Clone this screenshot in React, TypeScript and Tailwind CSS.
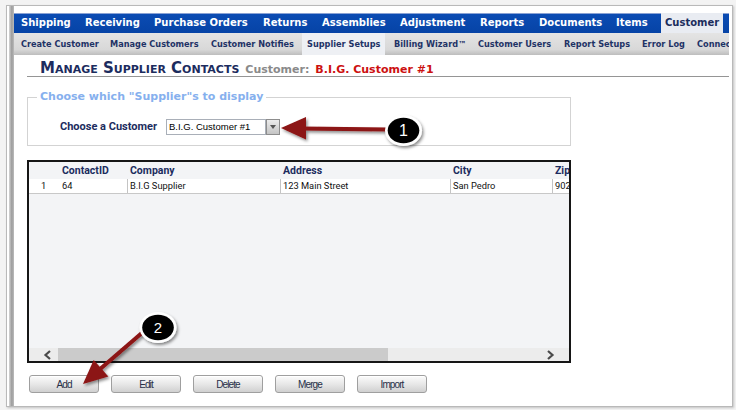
import React from "react";

const navItems = [
  { label: "Shipping", cls: "w-[64px]" },
  { label: "Receiving", cls: "w-[69px]" },
  { label: "Purchase Orders", cls: "w-[109px]" },
  { label: "Returns", cls: "w-[59px]" },
  { label: "Assemblies", cls: "w-[78px]" },
  { label: "Adjustment", cls: "w-[80px]" },
  { label: "Reports", cls: "w-[59px]" },
  { label: "Documents", cls: "w-[77px]" },
  { label: "Items", cls: "w-[52px]" },
];

const subItems = [
  { label: "Create Customer", cls: "w-[89px] pl-[7px]" },
  { label: "Manage Customers", cls: "w-[101px] pl-[7px]" },
  { label: "Customer Notifies", cls: "w-[98px] pl-[7px]" },
  { label: "Supplier Setups", cls: "w-[83px] pl-[5px] bg-[#eef0f4]" },
  { label: "Billing Wizard™", cls: "w-[86px] pl-[9px]" },
  { label: "Customer Users", cls: "w-[86px] pl-[7px]" },
  { label: "Report Setups", cls: "w-[78px] pl-[7px]" },
  { label: "Error Log", cls: "w-[55px] pl-[7px]" },
  { label: "Connections", cls: "w-[80px] pl-[7px]" },
];

const buttons = ["Add", "Edit", "Delete", "Merge", "Import"];

export default function App() {
  return (
    <div className="relative w-[736px] h-[410px] overflow-hidden bg-[#f3f3f3] pt-[5px] pl-[6px]">
      <div className="flex w-[727px] h-[402px] border border-[#b9b9b9] bg-white shadow-[1px_1px_2px_rgba(0,0,0,0.2)]">
        <div className="w-[2px] shrink-0" />
        <div className="w-[5px] shrink-0 bg-[linear-gradient(to_right,#d6d6d6,#9c9c9c_55%,#bcbcbc)]" />
        <div className="flex-1 min-w-0 pt-[7px] pr-[3px] flex flex-col">
          {/* top nav */}
          <div className="flex h-[20px] shrink-0 overflow-hidden bg-[linear-gradient(to_bottom,#8aa2d4_0px,#8aa2d4_1px,#0b4cb3_1px,#0643a6_100%)] font-['DejaVu_Sans',sans-serif] text-[10px] font-bold leading-[20px] text-white">
            {navItems.map((n) => (
              <div key={n.label} className={`${n.cls} shrink-0 pl-[7px] whitespace-nowrap`}>
                {n.label}
              </div>
            ))}
            <div className="w-[62px] shrink-0 pl-[4px] bg-[#e9ecf2] text-[#1b2d5c] whitespace-nowrap">
              Customer
            </div>
          </div>
          {/* sub nav */}
          <div className="flex h-[22px] shrink-0 overflow-hidden bg-[linear-gradient(to_bottom,#e4e4e4,#d8d8d8_75%,#bdbdbd)] font-['DejaVu_Sans',sans-serif] text-[8.2px] font-bold leading-[22px] text-[#1f3366]">
            {subItems.map((s) => (
              <div key={s.label} className={`${s.cls} shrink-0 whitespace-nowrap`}>
                {s.label}
              </div>
            ))}
          </div>
          {/* title */}
          <div className="ml-[13px] h-[22px] shrink-0 border-b border-[#959595] pt-[5px] pl-[13px] flex items-baseline font-['DejaVu_Sans',sans-serif] font-bold leading-[16px] whitespace-nowrap">
            <span className="text-[15px] text-[#1c2c5e] [font-variant:small-caps]">Manage Supplier Contacts</span>
            <span className="ml-[6px] text-[11px] text-[#8a8a8a]">Customer:</span>
            <span className="ml-[6px] text-[11px] text-[#cc1111]">B.I.G. Customer #1</span>
          </div>
          {/* fieldset */}
          <fieldset className="mt-[13px] ml-[13px] w-[544px] shrink-0 border border-[#d3d3d3] pl-[9px]">
            <legend className="px-[3px] font-['DejaVu_Sans',sans-serif] text-[11px] font-bold leading-[14px] text-[#86b0ee]">
              Choose which "Supplier"s to display
            </legend>
            <div className="flex items-center h-[16px] mt-[15px] mb-[10px] ml-[23px]">
              <div className="w-[106px] font-['Roboto',sans-serif] text-[11px] font-bold text-[#1c2c5e] whitespace-nowrap">
                Choose a Customer
              </div>
              <div className="w-[100px] h-[16px] border border-[#a9afb8] bg-white pl-[2px] font-['Liberation_Sans',Arial,sans-serif] text-[9.5px] leading-[14px] text-black whitespace-nowrap">
                B.I.G. Customer #1
              </div>
              <div className="w-[14px] h-[16px] border border-[#8d8d8d] bg-[linear-gradient(to_bottom,#ececec,#c4c4c4)] flex items-center justify-center">
                <svg width="6" height="4" viewBox="0 0 6 4">
                  <polygon points="0,0 6,0 3,4" fill="#555" />
                </svg>
              </div>
            </div>
          </fieldset>
          {/* grid */}
          <div className="mt-[14px] ml-[13px] w-[544px] h-[203px] shrink-0 border-2 border-[#161616] bg-[#f3f4f6] flex flex-col overflow-hidden">
            <div className="flex h-[17px] shrink-0 font-['Roboto',sans-serif] text-[10.5px] font-bold text-[#1c2c5e] leading-[17px] whitespace-nowrap">
              <div className="w-[30px] shrink-0" />
              <div className="w-[68px] shrink-0 pl-[3px]">ContactID</div>
              <div className="w-[153px] shrink-0 pl-[3px]">Company</div>
              <div className="w-[170px] shrink-0 pl-[3px]">Address</div>
              <div className="w-[102px] shrink-0 pl-[3px]">City</div>
              <div className="w-[40px] shrink-0 pl-[3px]">Zip</div>
            </div>
            <div className="flex h-[15px] shrink-0 bg-white border-b border-[#c8c8c8] font-['Roboto',sans-serif] text-[9.3px] text-[#111] leading-[14px] whitespace-nowrap overflow-hidden">
              <div className="w-[30px] shrink-0 pl-[12px]">1</div>
              <div className="w-[68px] shrink-0 pl-[3px]">64</div>
              <div className="w-[153px] shrink-0 pl-[2px] border-l border-[#c4c4c4]">B.I.G Supplier</div>
              <div className="w-[170px] shrink-0 pl-[2px] border-l border-[#c4c4c4]">123 Main Street</div>
              <div className="w-[102px] shrink-0 pl-[2px] border-l border-[#c4c4c4]">San Pedro</div>
              <div className="w-[40px] shrink-0 pl-[2px] border-l border-[#c4c4c4]">90210</div>
            </div>
            <div className="flex-1" />
            <div className="flex h-[13px] shrink-0 bg-[#ececec]">
              <div className="w-[29px] shrink-0 flex items-center pl-[14px]">
                <svg width="9" height="10" viewBox="0 0 9 10">
                  <polyline points="7,1 2.5,5 7,9" fill="none" stroke="#4a4a4a" strokeWidth="2.2" />
                </svg>
              </div>
              <div className="w-[330px] shrink-0 bg-[#cbcbcb]" />
              <div className="flex-1 flex items-center justify-end pr-[14px]">
                <svg width="9" height="10" viewBox="0 0 9 10">
                  <polyline points="2,1 6.5,5 2,9" fill="none" stroke="#4a4a4a" strokeWidth="2.2" />
                </svg>
              </div>
            </div>
          </div>
          {/* buttons */}
          <div className="mt-[12px] ml-[15px] flex gap-[12px]">
            {buttons.map((b) => (
              <div
                key={b}
                className="w-[70px] h-[18px] rounded-[3px] border border-[#9f9f9f] bg-[linear-gradient(to_bottom,#fbfbfb,#e8e8e8_50%,#d0d0d0)] shadow-[inset_0_1px_0_#ffffff] flex items-center justify-center font-['Liberation_Sans',Arial,sans-serif] text-[10px] tracking-[-0.9px] text-[#283048]"
              >
                {b}
              </div>
            ))}
          </div>
        </div>
      </div>

      {/* annotations */}
      <svg className="absolute left-0 top-0 pointer-events-none" width="736" height="410">
        <defs>
          <filter id="sh" x="-30%" y="-30%" width="170%" height="170%">
            <feDropShadow dx="1.5" dy="2" stdDeviation="1.5" floodColor="#000" floodOpacity="0.45" />
          </filter>
        </defs>
        <g filter="url(#sh)">
          <line x1="302" y1="128.5" x2="388" y2="129.5" stroke="#8c1313" strokeWidth="4" />
          <polygon points="281,128 306,117 306,139.5" fill="#8c1313" />
        </g>
        <g filter="url(#sh)">
          <line x1="99" y1="370" x2="143" y2="332" stroke="#8c1313" strokeWidth="4" />
          <polygon points="83,384 93.7,359.9 108.3,376.5" fill="#8c1313" />
        </g>
        <g filter="url(#sh)">
          <ellipse cx="403.5" cy="130.5" rx="18.5" ry="15.5" fill="#ffffff" />
        </g>
        <ellipse cx="403.5" cy="130.5" rx="15.8" ry="12.8" fill="#000" />
        <text x="403.5" y="135.5" textAnchor="middle" fontSize="16" fill="#fff" fontFamily="Liberation Sans, Arial, sans-serif">
          1
        </text>
        <g filter="url(#sh)">
          <ellipse cx="158" cy="327.5" rx="18.5" ry="15.5" fill="#ffffff" />
        </g>
        <ellipse cx="158" cy="327.5" rx="15.8" ry="12.8" fill="#000" />
        <text x="158" y="333" textAnchor="middle" fontSize="15" fill="#fff" fontFamily="Liberation Sans, Arial, sans-serif">
          2
        </text>
      </svg>
    </div>
  );
}
